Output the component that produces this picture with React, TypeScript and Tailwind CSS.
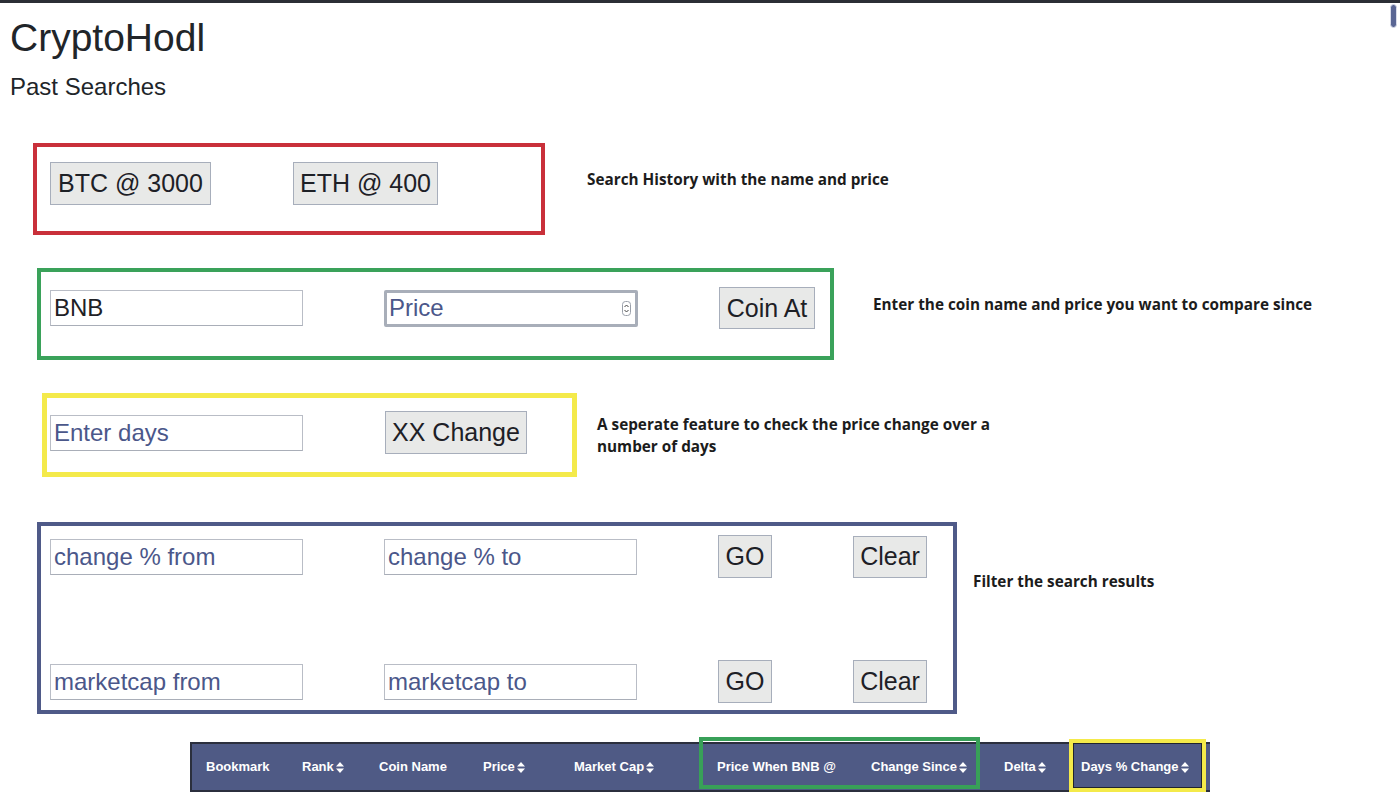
import React from "react";

const font = { fontFamily: '"Liberation Sans", Arial, sans-serif' };
const noteFont = { fontFamily: '"Open Sans", "Liberation Sans", sans-serif' };

function Btn({ label, w, h }: { label: string; w: string; h: string }) {
  return (
    <button
      className={`${w} ${h} shrink-0 bg-[#e8e9e8] border border-[#a7aebb] text-[25px] leading-none text-[#1d2026] flex items-center justify-center`}
    >
      {label}
    </button>
  );
}

function Field({ ph, value }: { ph: string; value?: string }) {
  return (
    <input
      readOnly
      defaultValue={value}
      placeholder={ph}
      className="w-[253px] h-[36px] shrink-0 border border-[#b9bdc6] border-b-[#a9aeb8] bg-white px-[3px] text-[24px] text-[#1e2126] placeholder:text-[#4b578a] outline-none"
    />
  );
}

function Sort() {
  return (
    <svg width="8" height="11" viewBox="0 0 8 11" className="ml-[2px] inline-block">
      <path d="M4 0 L8 4.5 L0 4.5 Z" fill="white" />
      <path d="M4 11 L8 6.5 L0 6.5 Z" fill="white" />
    </svg>
  );
}

const note = "text-[15.3px] font-bold text-[#1c1c1c] leading-[22px] whitespace-nowrap";

export default function App() {
  const cols: { t: string; w: string; s?: boolean }[] = [
    { t: "Bookmark", w: "w-[96px]" },
    { t: "Rank", w: "w-[77px]", s: true },
    { t: "Coin Name", w: "w-[104px]" },
    { t: "Price", w: "w-[91px]", s: true },
    { t: "Market Cap", w: "w-[143px]", s: true },
    { t: "Price When BNB @", w: "w-[154px]" },
    { t: "Change Since", w: "w-[133px]", s: true },
    { t: "Delta", w: "w-[77px]", s: true },
    { t: "Days % Change", w: "w-[145px]", s: true },
  ];
  return (
    <div className="relative w-[1400px] h-[796px] overflow-hidden bg-white" style={font}>
      <div className="h-[3px] bg-[#2b2e35]" />
      {/* scrollbar thumb */}
      <div className="absolute right-[3px] top-[4px] w-[7px] h-[24px] rounded-full bg-[#5a6694] border border-[#d9dcea]" />

      <div className="pl-[10px]">
        <h1 className="mt-[13px] text-[39px] leading-[44px] text-[#212529]">CryptoHodl</h1>
        <h2 className="mt-[13px] text-[24px] leading-[28px] text-[#212529]">Past Searches</h2>
      </div>

      {/* Row 1 */}
      <div className="flex items-start mt-[42px] ml-[33px]">
        <div className="w-[512px] h-[92px] border-4 border-[#c9303a] pl-[13px] pt-[15px] flex gap-[82px] items-start">
          <Btn label="BTC @ 3000" w="w-[161px]" h="h-[43px]" />
          <Btn label="ETH @ 400" w="w-[145px]" h="h-[43px]" />
        </div>
        <p className={`${note} ml-[42px] mt-[25px]`} style={noteFont}>
          Search History with the name and price
        </p>
      </div>

      {/* Row 2 */}
      <div className="flex items-start mt-[33px] ml-[37px]">
        <div className="w-[797px] h-[92px] border-4 border-[#3aa25a] pl-[9px] pt-[15px]">
          <div className="flex items-center gap-[81px] h-[42px]">
            <Field ph="" value="BNB" />
            <div className="w-[254px] h-[37px] shrink-0 border-[3px] border-[#a8aeb9] rounded-[2px] bg-white flex items-center pl-[2px] pr-[4px]">
              <input
                readOnly
                placeholder="Price"
                className="flex-1 min-w-0 text-[24px] placeholder:text-[#4b578a] outline-none bg-transparent"
              />
              <svg width="9" height="15" viewBox="0 0 9 15">
                <rect x="0.5" y="0.5" width="8" height="14" rx="3" fill="none" stroke="#9aa0aa" />
                <path d="M2.5 6 L4.5 4 L6.5 6" fill="none" stroke="#444" strokeWidth="1" />
                <path d="M2.5 9 L4.5 11 L6.5 9" fill="none" stroke="#444" strokeWidth="1" />
              </svg>
            </div>
            <Btn label="Coin At" w="w-[96px]" h="h-[42px]" />
          </div>
        </div>
        <p className={`${note} ml-[39px] mt-[25px]`} style={noteFont}>
          Enter the coin name and price you want to compare since
        </p>
      </div>

      {/* Row 3 */}
      <div className="flex items-start mt-[33px] ml-[42px]">
        <div className="w-[535px] h-[84px] border-[5px] border-[#f4ea4a] pl-[3px] pt-[13px]">
          <div className="flex items-center gap-[82px] h-[43px]">
            <Field ph="Enter days" />
            <Btn label="XX Change" w="w-[142px]" h="h-[43px]" />
          </div>
        </div>
        <p className={`${note} ml-[20px] mt-[20px]`} style={noteFont}>
          A seperate feature to check the price change over a
          <br />
          number of days
        </p>
      </div>

      {/* Row 4 */}
      <div className="flex items-start mt-[45px] ml-[37px]">
        <div className="w-[920px] h-[192px] border-4 border-[#4f5a88] pl-[9px] pt-[9px] flex flex-col gap-[82px]">
          <div className="flex items-center gap-[81px] h-[43px]">
            <Field ph="change % from" />
            <Field ph="change % to" />
            <div className="flex items-center gap-[81px]">
              <Btn label="GO" w="w-[54px]" h="h-[43px]" />
              <Btn label="Clear" w="w-[74px]" h="h-[42px]" />
            </div>
          </div>
          <div className="flex items-center gap-[81px] h-[43px]">
            <Field ph="marketcap from" />
            <Field ph="marketcap to" />
            <div className="flex items-center gap-[81px]">
              <Btn label="GO" w="w-[54px]" h="h-[43px]" />
              <Btn label="Clear" w="w-[74px]" h="h-[43px]" />
            </div>
          </div>
        </div>
        <p className={`${note} ml-[16px] mt-[48px]`} style={noteFont}>
          Filter the search results
        </p>
      </div>

      {/* Table header */}
      <div className="relative mt-[28px] ml-[190px] w-[1020px] h-[50px] bg-[#4f5a85] border-y-2 border-l-2 border-[#2b2f3d] flex items-center">
        {cols.map((c) => (
          <div key={c.t} className={`${c.w} shrink-0 pl-[14px] text-[13px] font-bold text-white flex items-center whitespace-nowrap`}>
            {c.t}
            {c.s && <Sort />}
          </div>
        ))}
        <div className="absolute left-[507px] top-[-7px] w-[281px] h-[52px] border-4 border-[#38a058]" />
        <div className="absolute left-[877px] top-[-5px] w-[137px] h-[53px] border-4 border-[#f4ea4a]">
          <div className="w-full h-full border border-[#20242e]" />
        </div>
      </div>
    </div>
  );
}
